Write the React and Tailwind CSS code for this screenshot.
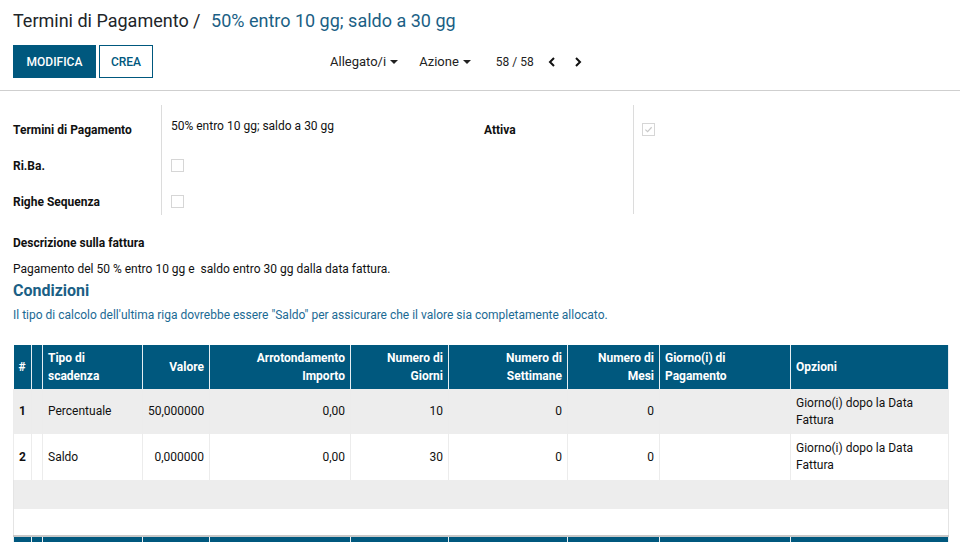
import React from "react";

const cols = [18, 11, 100, 67, 141, 98, 119, 92, 131, 158];

const heads = [
  { t: "#", a: "text-left" },
  { t: "", a: "text-left" },
  { t: "Tipo di scadenza", a: "text-left" },
  { t: "Valore", a: "text-right" },
  { t: "Arrotondamento Importo", a: "text-right" },
  { t: "Numero di Giorni", a: "text-right" },
  { t: "Numero di Settimane", a: "text-right" },
  { t: "Numero di Mesi", a: "text-right" },
  { t: "Giorno(i) di Pagamento", a: "text-left" },
  { t: "Opzioni", a: "text-left" },
];

const rows = [
  ["1", "", "Percentuale", "50,000000", "0,00", "10", "0", "0", "", "Giorno(i) dopo la Data Fattura"],
  ["2", "", "Saldo", "0,000000", "0,00", "30", "0", "0", "", "Giorno(i) dopo la Data Fattura"],
];

function Caret() {
  return <span className="inline-block ml-1 align-middle border-t-[4px] border-x-[4px] border-x-transparent border-t-[#222]" />;
}

function Check({ checked }) {
  return (
    <div className="w-[13px] h-[13px] border border-[#d6d6d6] bg-white flex items-center justify-center">
      {checked && (
        <svg width="9" height="9" viewBox="0 0 10 10">
          <path d="M1.5 5.2 L4 7.5 L8.5 2.5" fill="none" stroke="#c8c8c8" strokeWidth="1.3" />
        </svg>
      )}
    </div>
  );
}

export default function App() {
  return (
    <div className="w-[960px] h-[542px] overflow-hidden bg-white text-[#212529]" style={{ fontFamily: "Roboto, 'Liberation Sans', sans-serif" }}>
      {/* control panel */}
      <div className="px-[13px] pt-[9px] border-b border-[#cfcfcf] h-[91px]">
        <div className="text-[18px] leading-[24px] text-[#212529]">
          Termini di Pagamento / <span className="ml-[6px] text-[#1b5f85]">50% entro 10 gg; saldo a 30 gg</span>
        </div>
        <div className="flex items-center mt-[12px]">
          <button className="h-[33px] w-[83px] bg-[#00587e] text-white text-[12px] font-medium border border-[#00587e]">MODIFICA</button>
          <button className="h-[33px] w-[54px] ml-[3px] bg-white text-[#00587e] text-[12px] font-medium border border-[#00587e]">CREA</button>
          <div className="ml-[177px] flex items-center text-[13px] text-[#222]">
            <span>Allegato/i<Caret /></span>
            <span className="ml-[21px]">Azione<Caret /></span>
            <span className="ml-[25px] text-[12px]">58 / 58</span>
            <svg className="ml-[13px]" width="10" height="12" viewBox="0 0 10 12">
              <path d="M7 2 L3 6 L7 10" fill="none" stroke="#111" strokeWidth="2" />
            </svg>
            <svg className="ml-[16px]" width="10" height="12" viewBox="0 0 10 12">
              <path d="M3 2 L7 6 L3 10" fill="none" stroke="#111" strokeWidth="2" />
            </svg>
          </div>
        </div>
      </div>

      {/* form */}
      <div className="px-[13px] pt-[14px]">
        <div className="flex">
          <div className="flex w-[467px]">
            <div className="w-[149px] border-r border-[#dcdcdc] py-[1px]">
              <div className="h-[36px] flex items-center pt-[12px] text-[12px] font-bold text-[#111]">Termini di Pagamento</div>
              <div className="h-[36px] flex items-center pt-[12px] text-[12px] font-bold text-[#111]">Ri.Ba.</div>
              <div className="h-[36px] flex items-center pt-[12px] text-[12px] font-bold text-[#111]">Righe Sequenza</div>
            </div>
            <div className="pl-[9px]">
              <div className="h-[36px] flex items-center pt-[6px] text-[12px] text-[#111]">50% entro 10 gg; saldo a 30 gg</div>
              <div className="h-[36px] flex items-center pt-[12px]"><Check /></div>
              <div className="h-[36px] flex items-center pt-[12px]"><Check /></div>
            </div>
          </div>
          <div className="flex">
            <div className="w-[154px] pl-[4px] border-r border-[#dcdcdc] h-[109px] py-[1px]">
              <div className="h-[36px] flex items-center pt-[12px] text-[12px] font-bold text-[#111]">Attiva</div>
            </div>
            <div className="pl-[8px]">
              <div className="h-[36px] flex items-center pt-[12px]"><Check checked /></div>
            </div>
          </div>
        </div>

        <div className="mt-[19px] text-[12px] font-bold text-[#111]">Descrizione sulla fattura</div>
        <div className="mt-[8px] text-[12px] text-[#111]">Pagamento del 50 % entro 10 gg e&nbsp; saldo entro 30 gg dalla data fattura.</div>
        <div className="mt-[1px] text-[16px] font-bold text-[#1b5f85]">Condizioni</div>
        <div className="mt-[3px] text-[12px] text-[#1b6a94]">Il tipo di calcolo dell'ultima riga dovrebbe essere "Saldo" per assicurare che il valore sia completamente allocato.</div>

        <table className="mt-[21px] w-[935px] table-fixed border-collapse text-[12px]">
          <colgroup>
            {cols.map((w, i) => (
              <col key={i} style={{ width: w }} />
            ))}
          </colgroup>
          <thead>
            <tr className="bg-[#00587e] text-white h-[44px]">
              {heads.map((h, i) => (
                <th key={i} className={`${h.a} font-bold leading-[18px] px-[5px] border-x border-[#e6eef2] first:border-l-0 align-middle`}>
                  {h.t}
                </th>
              ))}
            </tr>
          </thead>
          <tbody>
            {rows.map((r, ri) => (
              <tr key={ri} className={`${ri % 2 === 0 ? "bg-[#ededed] h-[45px]" : "bg-white h-[46px]"}`}>
                {r.map((c, ci) => (
                  <td
                    key={ci}
                    className={`${heads[ci].a} ${ci === 0 ? "font-bold" : ""} px-[5px] leading-[17px] text-[#111] border-x border-[#ececec]`}
                  >
                    {c}
                  </td>
                ))}
              </tr>
            ))}
            <tr className="bg-[#ededed] h-[29px]">
              <td colSpan={10} className="border-x border-[#e4e4e4]" />
            </tr>
            <tr className="bg-white h-[27px] border-b-2 border-[#c8c8c8]">
              <td colSpan={10} className="border-x border-[#e4e4e4]" />
            </tr>
            <tr className="bg-[#00587e] h-[30px]">
              {cols.map((w, i) => (
                <td key={i} className="border-x border-[#e6eef2]" />
              ))}
            </tr>
          </tbody>
        </table>
      </div>
    </div>
  );
}
